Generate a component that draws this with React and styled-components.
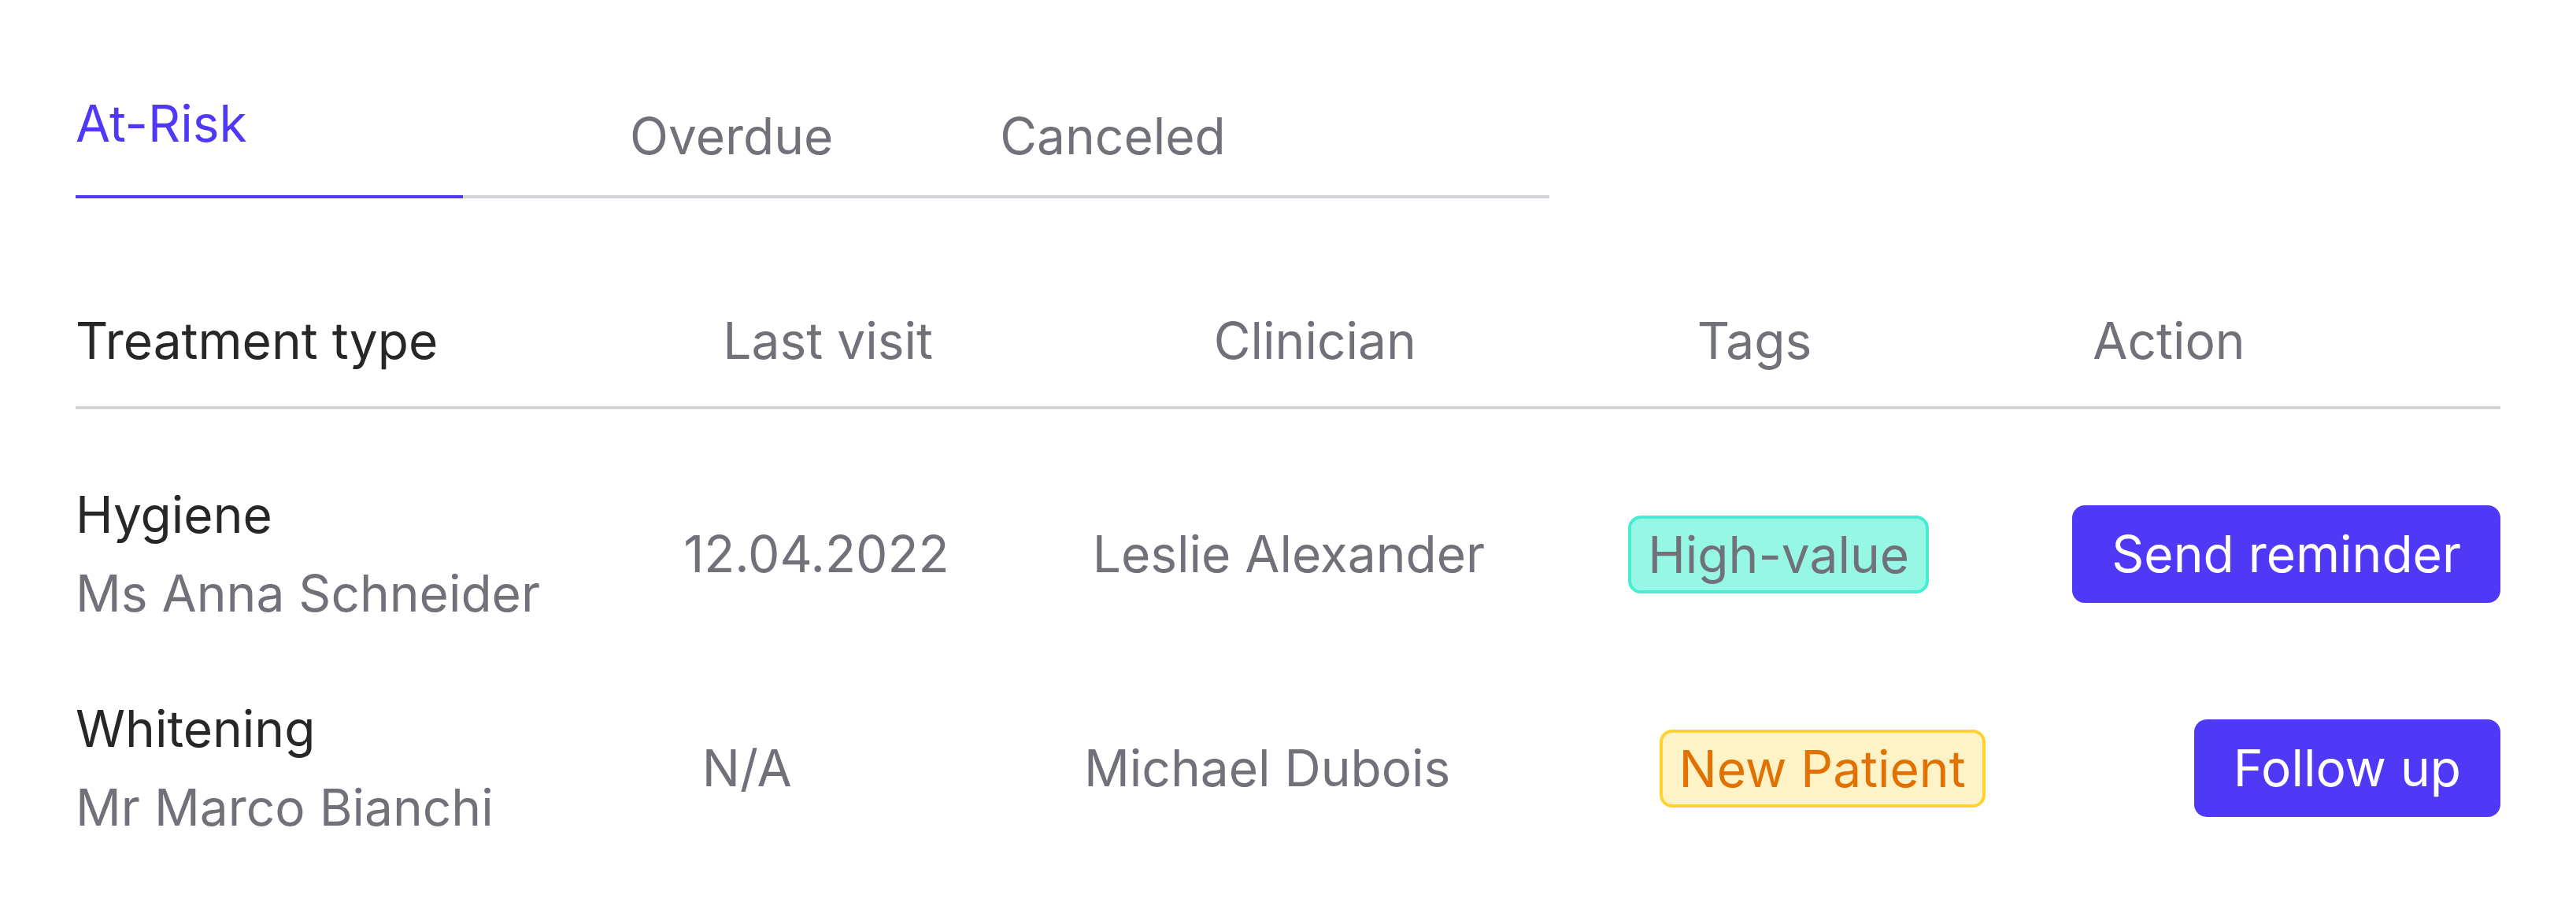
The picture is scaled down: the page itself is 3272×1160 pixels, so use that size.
import React from 'react';
import styled, { createGlobalStyle } from 'styled-components';

const GlobalStyle = createGlobalStyle`
  html, body {
    margin: 0;
    padding: 0;
    background: #ffffff;
  }
  body {
    font-family: Inter, "Liberation Sans", sans-serif;
  }
`;

const Page = styled.main`
  width: 3272px;
  box-sizing: border-box;
  padding: 107px 96px 0;
`;

const TabList = styled.nav`
  display: flex;
  align-items: flex-end;
  gap: 212px;
  width: 1872px;
  border-bottom: 4px solid #d4d4d8;
`;

const Tab = styled.div`
  font-size: 64px;
  line-height: 100px;
  color: ${p => (p.$active ? '#4f39f6' : '#71717a')};
  padding-bottom: ${p => (p.$active ? '41px' : '25px')};
  min-width: ${p => (p.$active ? '492px' : '0')};
  border-bottom: ${p => (p.$active ? '4px solid #4f39f6' : 'none')};
  margin-bottom: ${p => (p.$active ? '-4px' : '0')};
`;

const HeaderRow = styled.div`
  display: flex;
  gap: 357px;
  margin-top: 131px;
  padding-bottom: 33px;
  border-bottom: 4px solid #d4d4d8;
`;

const HeadCell = styled.div`
  font-size: 64px;
  line-height: 100px;
  color: ${p => (p.$strong ? '#27272a' : '#71717a')};
  margin-right: ${p => (p.$strong ? '5px' : '0')};
`;

const Body = styled.div`
  margin-top: 48px;
`;

const Row = styled.div`
  display: flex;
  align-items: center;
  justify-content: space-between;
  padding: 36px 0;
`;

const NameBlock = styled.div`
  display: flex;
  flex-direction: column;
  font-size: 64px;
  line-height: 100px;
`;

const Treatment = styled.span`
  color: #27272a;
`;

const Patient = styled.span`
  color: #71717a;
`;

const Cell = styled.div`
  font-size: 64px;
  line-height: 100px;
  color: #71717a;
  min-width: ${p => p.$min || 0}px;
`;

const tagColors = {
  teal: { bg: '#96f7e4', border: '#46edd5', text: '#71717a' },
  amber: { bg: '#fef3c6', border: '#ffd230', text: '#e17100' },
};

const Tag = styled.span`
  display: inline-block;
  font-size: 64px;
  line-height: 91px;
  padding: 0 21px;
  border: 4px solid ${p => tagColors[p.$tone].border};
  background: ${p => tagColors[p.$tone].bg};
  color: ${p => tagColors[p.$tone].text};
  border-radius: 16px;
`;

const ActionButton = styled.button`
  font-family: Inter, "Liberation Sans", sans-serif;
  font-size: 64px;
  line-height: 124px;
  height: 124px;
  padding: 0 50px;
  border: none;
  border-radius: 16px;
  background: #4f39f6;
  color: #ffffff;
  cursor: pointer;
`;

const rows = [
  {
    treatment: 'Hygiene',
    patient: 'Ms Anna Schneider',
    visit: '12.04.2022',
    clinician: 'Leslie Alexander',
    tag: 'High-value',
    tone: 'teal',
    action: 'Send reminder',
  },
  {
    treatment: 'Whitening',
    patient: 'Mr Marco Bianchi',
    visit: 'N/A',
    clinician: 'Michael Dubois',
    tag: 'New Patient',
    tone: 'amber',
    action: 'Follow up',
  },
];

function App() {
  return (
    <>
      <GlobalStyle />
      <Page>
        <TabList>
          <Tab $active>At-Risk</Tab>
          <Tab>Overdue</Tab>
          <Tab>Canceled</Tab>
        </TabList>

        <HeaderRow>
          <HeadCell $strong>Treatment type</HeadCell>
          <HeadCell>Last visit</HeadCell>
          <HeadCell>Clinician</HeadCell>
          <HeadCell>Tags</HeadCell>
          <HeadCell>Action</HeadCell>
        </HeaderRow>

        <Body>
          {rows.map(r => (
            <Row key={r.patient}>
              <NameBlock>
                <Treatment>{r.treatment}</Treatment>
                <Patient>{r.patient}</Patient>
              </NameBlock>
              <Cell $min={220}>{r.visit}</Cell>
              <Cell>{r.clinician}</Cell>
              <Tag $tone={r.tone}>{r.tag}</Tag>
              <ActionButton>{r.action}</ActionButton>
            </Row>
          ))}
        </Body>
      </Page>
    </>
  );
}

export default App;
